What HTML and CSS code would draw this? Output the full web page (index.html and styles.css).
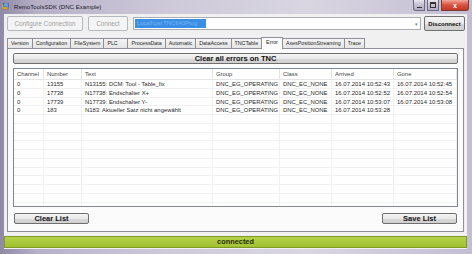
FILE: index.html
```html
<!DOCTYPE html>
<html>
<head>
  <title>RemoToolsSDK (DNC Example)</title>
  <meta name="viewport" content="width=device-width, initial-scale=1.0">
  <link rel="stylesheet" href="styles.css">
</head>
<body>
  <div class="window">
    <div class="titlebar">
      <svg class="app-icon" width="7" height="7" viewBox="0 0 7 7">
        <rect x="0" y="1" width="6" height="5" fill="#e8c34a" stroke="#8a6a12" stroke-width="0.6"/>
        <rect x="1.5" y="0" width="5" height="4" fill="#6b9fd8" stroke="#2e5c98" stroke-width="0.6"/>
      </svg>
      <span class="title">RemoToolsSDK (DNC Example)</span>
      <div class="controls">
        <span class="ctl min"><i></i></span>
        <span class="ctl max"><i></i></span>
        <span class="ctl close">x</span>
      </div>
    </div>
    <div class="client">
      <div class="toolbar">
        <button class="btn disabled configure">Configure Connection</button>
        <button class="btn disabled connect">Connect</button>
        <div class="combo">
          <span class="combo-sel">Localhost TNC640Prog</span>
          <span class="combo-arrow">&#9662;</span>
        </div>
        <button class="btn strong disconnect">Disconnect</button>
      </div>
      <div class="tabs">
        <span class="tab">Version</span>
        <span class="tab">Configuration</span>
        <span class="tab">FileSystem</span>
        <span class="tab plc">PLC</span>
        <span class="tab">ProcessData</span>
        <span class="tab">Automatic</span>
        <span class="tab">DataAccess</span>
        <span class="tab">TNCTable</span>
        <span class="tab active">Error</span>
        <span class="tab">AxesPositionStreaming</span>
        <span class="tab">Trace</span>
      </div>
      <div class="panel">
        <button class="btn big clear-all">Clear all errors on TNC</button>
        <div class="list">
          <div class="row head">
            <span>Channel</span><span>Number</span><span>Text</span><span>Group</span><span>Class</span><span>Arrived</span><span>Gone</span>
          </div>
          <div class="row">
            <span>0</span><span>13155</span><span>N13155: DCM: Tool - Table_fix</span><span>DNC_EG_OPERATING</span><span>DNC_EC_NONE</span><span class="date">16.07.2014 10:52:43</span><span class="date">16.07.2014 10:52:45</span>
          </div>
          <div class="row">
            <span>0</span><span>17738</span><span>N17738: Endschalter X+</span><span>DNC_EG_OPERATING</span><span>DNC_EC_NONE</span><span class="date">16.07.2014 10:52:52</span><span class="date">16.07.2014 10:52:54</span>
          </div>
          <div class="row">
            <span>0</span><span>17739</span><span>N17739: Endschalter Y-</span><span>DNC_EG_OPERATING</span><span>DNC_EC_NONE</span><span class="date">16.07.2014 10:53:07</span><span class="date">16.07.2014 10:53:08</span>
          </div>
          <div class="row">
            <span>0</span><span>183</span><span>N183: Aktueller Satz nicht angewählt</span><span>DNC_EG_OPERATING</span><span>DNC_EC_NONE</span><span class="date">16.07.2014 10:53:28</span><span></span>
          </div>
          <div class="row"><span></span><span></span><span></span><span></span><span></span><span></span><span></span></div>
          <div class="row"><span></span><span></span><span></span><span></span><span></span><span></span><span></span></div>
          <div class="row"><span></span><span></span><span></span><span></span><span></span><span></span><span></span></div>
          <div class="row"><span></span><span></span><span></span><span></span><span></span><span></span><span></span></div>
          <div class="row"><span></span><span></span><span></span><span></span><span></span><span></span><span></span></div>
          <div class="row"><span></span><span></span><span></span><span></span><span></span><span></span><span></span></div>
          <div class="row"><span></span><span></span><span></span><span></span><span></span><span></span><span></span></div>
          <div class="row"><span></span><span></span><span></span><span></span><span></span><span></span><span></span></div>
          <div class="row"><span></span><span></span><span></span><span></span><span></span><span></span><span></span></div>
          <div class="row"><span></span><span></span><span></span><span></span><span></span><span></span><span></span></div>
          <div class="row"><span></span><span></span><span></span><span></span><span></span><span></span><span></span></div>
        </div>
        <div class="actions">
          <button class="btn big action">Clear List</button>
          <button class="btn big action">Save List</button>
        </div>
      </div>
      <div class="status">connected</div>
    </div>
  </div>
</body>
</html>
```

FILE: styles.css
```css
html, body {
  margin: 0;
  padding: 0;
  width: 472px;
  height: 254px;
  overflow: hidden;
  font-family: "Liberation Sans", Arial, sans-serif;
  color: #1e1e1e;
}
.window {
  height: 254px;
  box-sizing: border-box;
  display: flex;
  flex-direction: column;
  padding: 0 5px 5px 4px;
  background: linear-gradient(to right, #8f89a6 0%, #b7b1c8 8%, #cdc9d9 35%, #d9d6e2 65%, #c3bdd2 100%);
}
.titlebar {
  height: 16px;
  display: flex;
  align-items: flex-start;
  margin: 0 -5px 0 -4px;
  padding-left: 2px;
}
.app-icon {
  margin-top: 3px;
}
.title {
  margin: 3px 0 0 5px;
  font-size: 6.1px;
  color: #1b1b2b;
}
.controls {
  margin-left: auto;
  margin-right: 3px;
  display: flex;
  gap: 2px;
}
.ctl {
  height: 11px;
  width: 12px;
  box-sizing: border-box;
  border: 1px solid #6e6a80;
  border-top: none;
  background: linear-gradient(#e8e6ee, #c4c0d0 50%, #b2adc2);
  display: flex;
  align-items: center;
  justify-content: center;
}
.ctl.min {
  border-radius: 0 0 0 3px;
}
.ctl.min i {
  width: 5px;
  height: 1px;
  background: #333;
  margin-top: 4px;
}
.ctl.max i {
  width: 4px;
  height: 3px;
  border: 1px solid #333;
  border-top-width: 2px;
}
.ctl.close {
  width: 28px;
  border-radius: 0 0 3px 0;
  border-color: #7d3830;
  background: linear-gradient(#f0a99a, #d9503c 50%, #c33a25);
  color: #fff;
  font-size: 7px;
  font-weight: bold;
}
.client {
  flex: 1;
  display: flex;
  flex-direction: column;
  background: #f0f0f0;
  padding-bottom: 1px;
}
.toolbar {
  height: 18px;
  box-sizing: border-box;
  display: flex;
  align-items: flex-start;
  padding: 2px 2px 0 3px;
  gap: 5px;
}
.btn {
  font-family: "Liberation Sans", Arial, sans-serif;
  height: 15px;
  padding: 0;
  border: 1px solid #707070;
  border-radius: 2px;
  background: linear-gradient(#f4f4f4, #e9e9e9 50%, #d8d8d8 51%, #cfcfcf);
  color: #111;
  font-size: 6.3px;
}
.btn.disabled {
  border-color: #b5b9bc;
  background: #f4f4f4;
  color: #a2a2a2;
}
.configure {
  width: 76px;
}
.connect {
  width: 40px;
}
.combo {
  width: 288px;
  height: 13px;
  margin-top: 1px;
  box-sizing: border-box;
  border: 1px solid #abadb3;
  background: #fff;
  display: flex;
  align-items: center;
  padding-left: 1px;
}
.combo-sel {
  width: 69px;
  height: 9px;
  background: #3a8ee6;
  color: #7ab4f0;
  font-size: 5.8px;
  line-height: 9px;
  padding-left: 2px;
  white-space: nowrap;
  overflow: hidden;
}
.combo-arrow {
  margin-left: auto;
  margin-right: 2px;
  font-size: 5px;
  color: #777;
}
.disconnect {
  width: 41px;
  margin-left: -2px;
}
.btn.strong {
  font-weight: bold;
  font-size: 6px;
}
.tabs {
  height: 14px;
  margin-top: 2px;
  padding-left: 3px;
  display: flex;
  align-items: flex-end;
}
.tab {
  height: 10px;
  box-sizing: border-box;
  padding: 0 3px;
  border: 1px solid #8e9096;
  border-bottom: none;
  margin-right: -1px;
  background: linear-gradient(#f4f4f4, #e4e4e4);
  font-size: 5.3px;
  line-height: 9px;
  white-space: nowrap;
}
.tab.plc {
  width: 25px;
}
.tab.active {
  height: 12px;
  background: #fbfbfb;
  position: relative;
  z-index: 1;
  margin-bottom: -1px;
  line-height: 9px;
  padding: 0 4px;
}
.panel {
  height: 184px;
  box-sizing: border-box;
  margin: 0 3px 0 3px;
  border: 1px solid #8e9096;
  background: #fbfbfb;
  padding: 4px 5px 7px 5px;
  display: flex;
  flex-direction: column;
}
.btn.big {
  height: 11px;
  font-size: 7.5px;
  font-weight: bold;
  line-height: 9px;
}
.list {
  flex: 1;
  margin: 4px 0 0 0;
  border: 1px solid #828790;
  background: #fff;
  overflow: hidden;
}
.row {
  display: grid;
  grid-template-columns: 30px 38px 131px 67px 52px 62px 1fr;
  height: 8.75px;
  box-sizing: border-box;
  border-bottom: 1px solid #f1f1f1;
  font-size: 5.9px;
  line-height: 8px;
  color: #2a2a2a;
}
.row span {
  padding-left: 3px;
  border-right: 1px solid #f1f1f1;
  white-space: nowrap;
  overflow: hidden;
}
.row span.date {
  font-size: 6px;
}
.row.head {
  height: 11px;
  line-height: 11px;
  border-bottom: 1px solid #e5e5e5;
  color: #444;
}
.row.head span {
  border-right-color: #e5e5e5;
}
.actions {
  display: flex;
  justify-content: space-between;
  margin-top: 6px;
  padding: 0 1px;
}
.action {
  width: 75px;
}
.status {
  height: 12px;
  margin-top: 4px;
  box-sizing: border-box;
  border: 1px solid #7f9a24;
  background: linear-gradient(#b4d24a, #a2c232);
  text-align: center;
  font-size: 7.4px;
  font-weight: bold;
  line-height: 10px;
  color: #26300a;
}
```
